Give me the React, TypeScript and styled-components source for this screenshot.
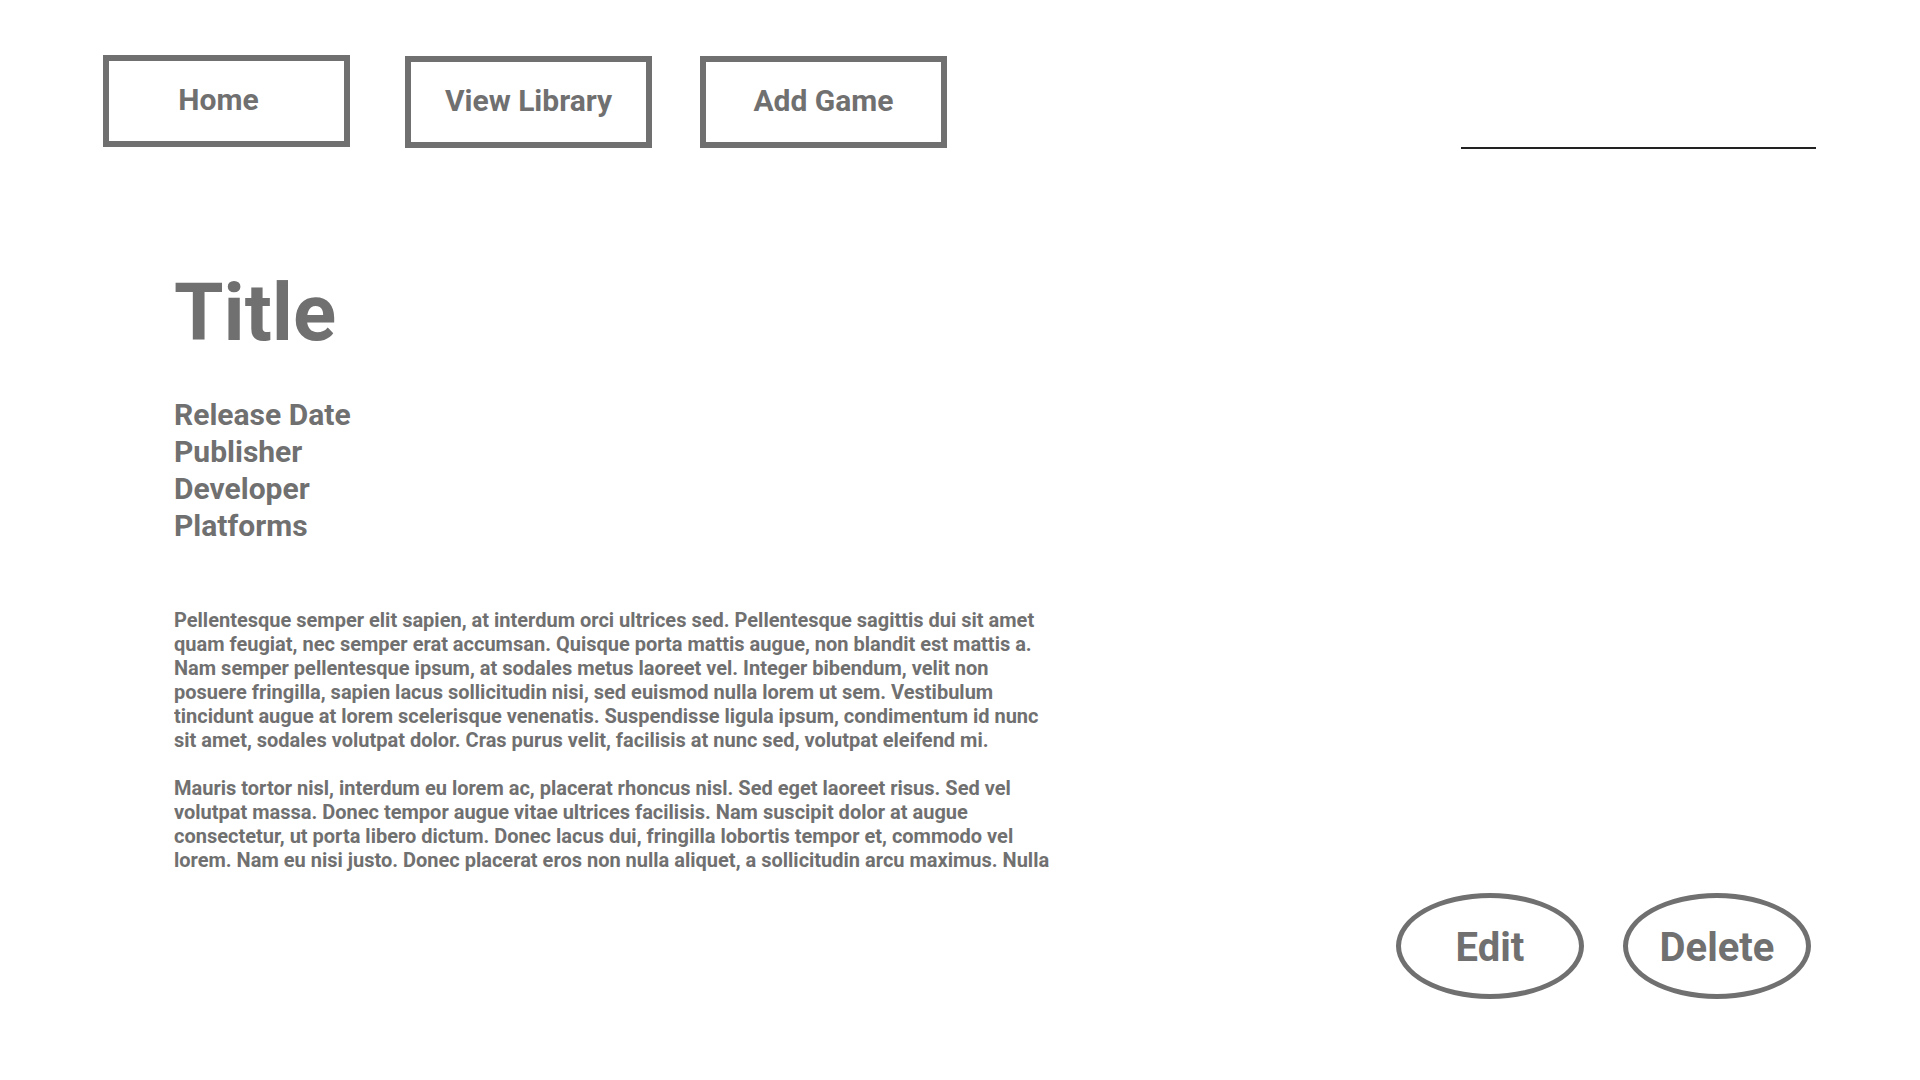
import styled, { createGlobalStyle } from 'styled-components';

const GlobalStyle = createGlobalStyle`
  html, body {
    margin: 0;
    padding: 0;
    background: #fff;
  }

  body {
    font-family: Roboto, 'Liberation Sans', sans-serif;
    color: #707070;
  }
`;

const NavLinks = ['Home', 'View Library', 'Add Game'];

const MetaFields = ['Release Date', 'Publisher', 'Developer', 'Platforms'];

const Paragraphs = [
  'Pellentesque semper elit sapien, at interdum orci ultrices sed. Pellentesque sagittis dui sit amet quam feugiat, nec semper erat accumsan. Quisque porta mattis augue, non blandit est mattis a. Nam semper pellentesque ipsum, at sodales metus laoreet vel. Integer bibendum, velit non posuere fringilla, sapien lacus sollicitudin nisi, sed euismod nulla lorem ut sem. Vestibulum tincidunt augue at lorem scelerisque venenatis. Suspendisse ligula ipsum, condimentum id nunc sit amet, sodales volutpat dolor. Cras purus velit, facilisis at nunc sed, volutpat eleifend mi.',
  'Mauris tortor nisl, interdum eu lorem ac, placerat rhoncus nisl. Sed eget laoreet risus. Sed vel volutpat massa. Donec tempor augue vitae ultrices facilisis. Nam suscipit dolor at augue consectetur, ut porta libero dictum. Donec lacus dui, fringilla lobortis tempor et, commodo vel lorem. Nam eu nisi justo. Donec placerat eros non nulla aliquet, a sollicitudin arcu maximus. Nulla facilisi. Curabitur vitae lectus eu nibh fermentum tincidunt. Aenean at ante vel leo interdum dictum.',
];

export default function App() {
  return (
    <>
      <GlobalStyle />
      <Page>
        <Header>
          <Nav>
            {NavLinks.map((link) => (
              <NavButton key={link} $home={link === 'Home'}>
                {link}
              </NavButton>
            ))}
          </Nav>
          <Search type="text" aria-label="Search" />
        </Header>
        <Main>
          <Title>Title</Title>
          <MetaList>
            {MetaFields.map((field) => (
              <MetaItem key={field}>{field}</MetaItem>
            ))}
          </MetaList>
          <Description>
            {Paragraphs.map((text, i) => (
              <Paragraph key={i}>{text}</Paragraph>
            ))}
          </Description>
        </Main>
        <Actions>
          <OvalButton>Edit</OvalButton>
          <OvalButton>Delete</OvalButton>
        </Actions>
      </Page>
    </>
  );
}

const Page = styled.div`
  width: 1920px;
  height: 1080px;
  box-sizing: border-box;
  padding: 55px 104px 0 103px;
  overflow: hidden;
`;

const Header = styled.div`
  display: flex;
  justify-content: space-between;
  align-items: flex-end;
`;

const Nav = styled.nav`
  display: flex;
  gap: 48px;
`;

interface HomeProps {
  $home: boolean;
}

const NavButton = styled.button<HomeProps>`
  width: 247px;
  height: 92px;
  box-sizing: border-box;
  margin-top: ${(props) => (props.$home ? '0' : '1px')};
  margin-right: ${(props) => (props.$home ? '7px' : '0')};
  padding: 0 ${(props) => (props.$home ? '16px' : '0')} 3px 0;

  background: #fff;
  border: 6px solid #707070;

  font-family: Roboto, 'Liberation Sans', sans-serif;
  font-size: 30px;
  font-weight: 700;
  color: #707070;
  cursor: pointer;
`;

const Search = styled.input`
  width: 355px;
  height: 40px;
  box-sizing: border-box;
  margin-bottom: -1px;

  border: none;
  border-bottom: 2px solid #222;
  outline: none;
  background: transparent;

  font-family: Roboto, 'Liberation Sans', sans-serif;
  font-size: 20px;
`;

const Main = styled.main`
  padding-left: 71px;
  margin-top: 125px;
`;

const Title = styled.h1`
  margin: 0;
  font-size: 80px;
  line-height: 1;
  font-weight: 700;
`;

const MetaList = styled.div`
  display: flex;
  flex-direction: column;
  margin-top: 43px;
`;

const MetaItem = styled.div`
  font-size: 30px;
  line-height: 37px;
  font-weight: 700;
`;

const Description = styled.div`
  width: 885px;
  height: 264px;
  margin-top: 64px;
  overflow: hidden;
`;

const Paragraph = styled.p`
  margin: 0 0 24px;
  font-size: 20px;
  line-height: 24px;
  font-weight: 700;
`;

const Actions = styled.div`
  display: flex;
  justify-content: flex-end;
  gap: 39px;
  margin-top: 21px;
  margin-right: 5px;
`;

const OvalButton = styled.button`
  width: 188px;
  height: 106px;
  box-sizing: border-box;
  padding: 2px 0 0;

  background: #fff;
  border: 5px solid #707070;
  border-radius: 50%;

  font-family: Roboto, 'Liberation Sans', sans-serif;
  font-size: 40px;
  font-weight: 700;
  color: #707070;
  cursor: pointer;
`;
